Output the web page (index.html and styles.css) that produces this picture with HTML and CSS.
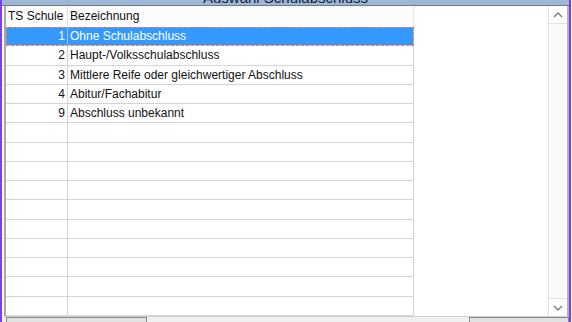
FILE: index.html
```html
<!DOCTYPE html>
<html lang="de">
<head>
    <meta charset="UTF-8">
    <title>Auswahl Schulabschluss</title>
    <link rel="stylesheet" href="styles.css">
</head>
<body>
    <div class="fenster">
        <div class="titel"><span>Auswahl Schulabschluss</span></div>

        <div class="inhalt">
            <div class="tabelle">
                <div class="kopf">
                    <div class="zelle nr">TS Schule</div>
                    <div class="zelle">Bezeichnung</div>
                </div>
                <div class="zeile aktiv">
                    <div class="zelle nr">1</div>
                    <div class="zelle">Ohne Schulabschluss</div>
                </div>
                <div class="zeile">
                    <div class="zelle nr">2</div>
                    <div class="zelle">Haupt-/Volksschulabschluss</div>
                </div>
                <div class="zeile">
                    <div class="zelle nr">3</div>
                    <div class="zelle">Mittlere Reife oder gleichwertiger Abschluss</div>
                </div>
                <div class="zeile">
                    <div class="zelle nr">4</div>
                    <div class="zelle">Abitur/Fachabitur</div>
                </div>
                <div class="zeile">
                    <div class="zelle nr">9</div>
                    <div class="zelle">Abschluss unbekannt</div>
                </div>
                <div class="zeile"><div class="zelle nr"></div><div class="zelle"></div></div>
                <div class="zeile"><div class="zelle nr"></div><div class="zelle"></div></div>
                <div class="zeile"><div class="zelle nr"></div><div class="zelle"></div></div>
                <div class="zeile"><div class="zelle nr"></div><div class="zelle"></div></div>
                <div class="zeile"><div class="zelle nr"></div><div class="zelle"></div></div>
                <div class="zeile"><div class="zelle nr"></div><div class="zelle"></div></div>
                <div class="zeile"><div class="zelle nr"></div><div class="zelle"></div></div>
                <div class="zeile"><div class="zelle nr"></div><div class="zelle"></div></div>
                <div class="zeile"><div class="zelle nr"></div><div class="zelle"></div></div>
                <div class="zeile"><div class="zelle nr"></div><div class="zelle"></div></div>
            </div>

            <div class="leer"></div>

            <div class="scroll">
                <div class="pfeil">
                    <svg width="10" height="6" viewBox="0 0 10 6"><path d="M1 5 L5 1 L9 5" fill="none" stroke="#7a7a7a" stroke-width="1.3"/></svg>
                </div>
                <div class="spur"></div>
                <div class="pfeil">
                    <svg width="10" height="6" viewBox="0 0 10 6"><path d="M1 1 L5 5 L9 1" fill="none" stroke="#7a7a7a" stroke-width="1.3"/></svg>
                </div>
            </div>
        </div>

        <div class="knoepfe">
            <div class="knopf links"></div>
            <div class="mitte"></div>
            <div class="knopf rechts"></div>
        </div>
    </div>
</body>
</html>
```

FILE: styles.css
```css
* {
    padding: 0;
    margin: 0;
    box-sizing: border-box;
}

body {
    background-color: white;
    width: 572px;
    height: 322px;
    overflow: hidden;
    font-family: "Liberation Sans", Arial, sans-serif;
    font-size: 12px;
    color: #111;
}

.fenster {
    display: flex;
    flex-direction: column;
    height: 322px;
    border-left: 2px solid #7d3cf2;
    border-right: 2px solid #7d3cf2;
    margin-right: 1px;
}

.titel {
    height: 6px;
    overflow: hidden;
    background-color: #9cb8d6;
    border-bottom: 1px solid #707a86;
    text-align: center;
}

.titel span {
    display: block;
    margin-top: -10px;
    font-size: 15px;
    line-height: 16px;
    color: #1c2430;
}

.inhalt {
    display: flex;
    height: 311px;
    margin-left: 2px;
    border-left: 2px solid #a8a8a8;
    border-right: 2px solid #b4b4b4;
    border-bottom: 1px solid #d0d0d0;
}

.tabelle {
    width: 408px;
    display: flex;
    flex-direction: column;
}

.kopf {
    display: flex;
    height: 21px;
    background-color: #fcfcfc;
}

.kopf .zelle {
    line-height: 21px;
    border-right: 1px solid #e4e4e4;
}

.zeile {
    display: flex;
    height: 19.33px;
    border-bottom: 1px solid #d4d4d4;
}

.zelle {
    flex: 1;
    padding: 0 2px;
    line-height: 18px;
    white-space: nowrap;
    overflow: hidden;
    border-right: 1px solid #d4d4d4;
}

.zelle.nr {
    flex: none;
    width: 62px;
}

.zeile .zelle.nr {
    text-align: right;
}

.zeile.aktiv {
    background-color: #3399ff;
    color: white;
    outline: 1px dashed #ff7a50;
    outline-offset: -1px;
    border-bottom-color: #d4d4d4;
}

.zeile.aktiv .zelle {
    border-right-color: #9cc8f5;
}

.leer {
    flex: 1;
}

.scroll {
    width: 19px;
    display: flex;
    flex-direction: column;
    background-color: #fafafa;
    border-left: 1px solid #e2e2e2;
}

.pfeil {
    height: 18px;
    display: flex;
    align-items: center;
    justify-content: center;
    background-color: white;
    border-bottom: 1px solid #e2e2e2;
}

.pfeil:last-child {
    border-bottom: none;
    border-top: 1px solid #e2e2e2;
}

.spur {
    flex: 1;
}

.knoepfe {
    display: flex;
    flex: 1;
    background-color: #f0f0f0;
    padding-left: 4px;
}

.knopf {
    background-color: #e1e1e1;
    border-top: 1px solid #8a8a8a;
    border-left: 1px solid #8a8a8a;
    border-right: 1px solid #8a8a8a;
}

.links {
    width: 141px;
}

.mitte {
    flex: 1;
}

.rechts {
    width: 100px;
}
```
